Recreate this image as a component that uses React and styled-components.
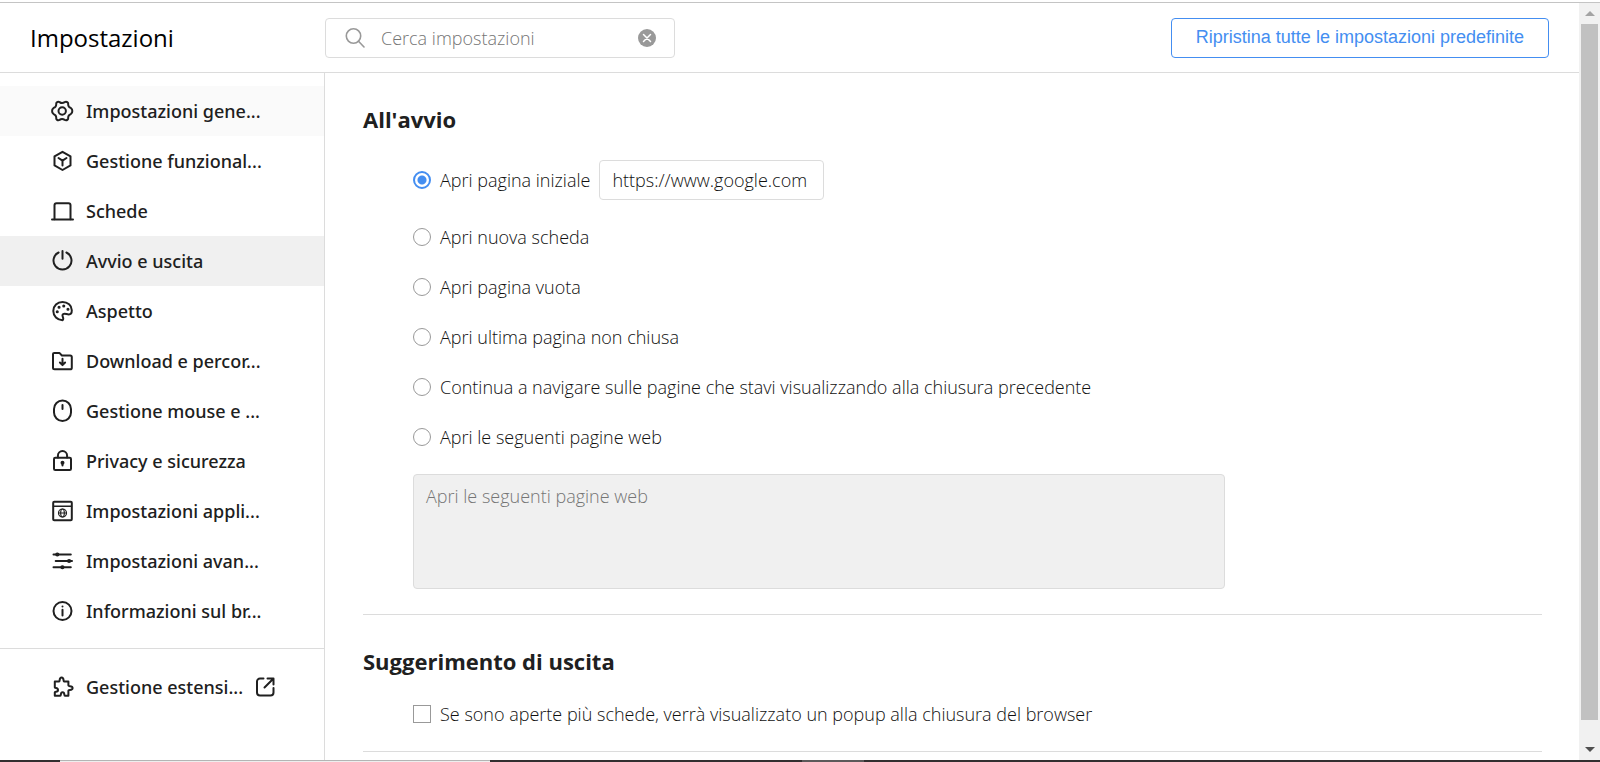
import React, { useState } from 'react'
import styled, { createGlobalStyle } from 'styled-components'

const GlobalStyle = createGlobalStyle`
  * {
    box-sizing: border-box;
  }
  body {
    margin: 0;
    background: #fff;
    color: #202020;
    font-family: "Open Sans", "Noto Sans", sans-serif;
    font-size: 18px;
  }
`

const Page = styled.div`
  display: flex;
  flex-direction: column;
  height: 100vh;
  padding-top: 2px;
  overflow: hidden;
`

const Window = styled.div`
  flex: 1;
  display: flex;
  min-height: 0;
  border-top: 1px solid #c4c4c4;
`

const Settings = styled.div`
  flex: 1;
  display: flex;
  flex-direction: column;
  min-width: 0;
`

const Header = styled.header`
  display: flex;
  align-items: center;
  flex: none;
  height: 70px;
  padding-right: 30px;
  border-bottom: 1px solid #dcdcdc;
`

const Title = styled.h1`
  width: 325px;
  margin: 0;
  padding-left: 30px;
  color: #000;
  font-size: 24px;
  font-weight: 400;
  line-height: 32px;
`

const SearchBox = styled.div`
  display: flex;
  align-items: center;
  width: 350px;
  height: 40px;
  padding: 0 18px 0 19px;
  border: 1px solid #dcdcdc;
  border-radius: 4px;
`

const SearchInput = styled.input`
  flex: 1;
  min-width: 0;
  padding: 0 16px;
  border: 0;
  outline: 0;
  background: none;
  color: #202020;
  font-family: inherit;
  font-size: 18px;
  font-weight: 300;

  &::placeholder {
    color: #757575;
    opacity: 1;
  }
`

const ClearButton = styled.button`
  display: flex;
  padding: 0;
  border: 0;
  background: none;
  cursor: pointer;
`

const ResetButton = styled.button`
  height: 40px;
  margin-left: auto;
  padding: 0 24px;
  border: 1px solid #448ef1;
  border-radius: 4px;
  background: #fff;
  color: #448ef1;
  font-family: "Liberation Sans", Arial, sans-serif;
  font-size: 18px;
  cursor: pointer;
`

const Body = styled.div`
  flex: 1;
  display: flex;
  min-height: 0;
`

const Sidebar = styled.nav`
  flex: none;
  width: 325px;
  border-right: 1px solid #dcdcdc;
`

const NavList = styled.ul`
  margin: 0;
  padding: 13px 0 12px;
  list-style: none;

  & + & {
    border-top: 1px solid #dcdcdc;
  }
`

const NavLink = styled.a`
  display: flex;
  align-items: center;
  gap: 12px;
  height: 50px;
  padding-left: 50px;
  background: ${(props) => props.$background || 'none'};
  color: #202020;
  font-family: "Noto Sans", "Open Sans", sans-serif;
  font-weight: 500;
  text-decoration: none;
  white-space: nowrap;
`

const Icon = styled.svg`
  flex: none;
  fill: none;
  stroke: ${(props) => props.$color || '#202020'};
  stroke-width: 2;
  stroke-linecap: round;
  stroke-linejoin: round;
`

const Content = styled.main`
  flex: 1;
  min-width: 0;
  padding: 0 37px 0 38px;
  overflow: hidden;
`

const Section = styled.section`
  padding-bottom: ${(props) => props.$bottom};
  border-bottom: 1px solid #dcdcdc;
`

const Heading = styled.h2`
  display: flex;
  align-items: center;
  height: 74px;
  margin: 0;
  padding-top: 18px;
  font-size: 22px;
  font-weight: 700;
`

const Option = styled.div`
  display: flex;
  align-items: center;
  height: ${(props) => (props.$tall ? '65px' : '50px')};
  padding-left: 50px;
`

const OptionLabel = styled.label`
  display: flex;
  align-items: center;
  gap: 9px;
  color: #101010;
  font-weight: 300;
`

const Radio = styled.input`
  appearance: none;
  width: 18px;
  height: 18px;
  margin: 0;
  border: 1px solid #999;
  border-radius: 50%;
  background: #fff;

  &:checked {
    border: 2px solid #448ef1;
    background: radial-gradient(circle, #448ef1 4px, #fff 5px);
  }
`

const Checkbox = styled.input`
  appearance: none;
  width: 18px;
  height: 18px;
  margin: 0;
  border: 1px solid #999;
  background: #fff;

  &:checked {
    background: #448ef1;
  }
`

const UrlInput = styled.input`
  width: 225px;
  height: 40px;
  margin-left: 9px;
  padding: 0 12px;
  border: 1px solid #dcdcdc;
  border-radius: 4px;
  color: #101010;
  font-family: inherit;
  font-size: 18px;
  font-weight: 300;
`

const PagesArea = styled.textarea`
  display: block;
  width: 812px;
  max-width: calc(100% - 50px);
  height: 115px;
  margin: 12px 0 0 50px;
  padding: 8px 12px;
  border: 1px solid #dcdcdc;
  border-radius: 4px;
  background: #f0f0f0;
  font-family: inherit;
  font-size: 18px;
  font-weight: 300;
  line-height: 26px;
  resize: none;

  &::placeholder {
    color: #757575;
    opacity: 1;
  }
`

const Scrollbar = styled.div`
  display: flex;
  flex-direction: column;
  flex: none;
  width: 21px;
  padding: 0 2px;
  background: #f1f1f1;
`

const ScrollButton = styled.button`
  display: flex;
  align-items: center;
  justify-content: center;
  height: 21px;
  padding: 0;
  border: 0;
  background: none;
`

const Track = styled.div`
  flex: 1;
  padding-bottom: 19px;
`

const Thumb = styled.div`
  height: 100%;
  background: #c1c1c1;
`

const Taskbar = styled.div`
  display: flex;
  flex: none;
  height: 2px;
  background: #332f30;
`

const TaskbarSearch = styled.div`
  width: 430px;
  margin-left: 60px;
  border-top: 1px solid #b4b4b4;
  background: #eee;
`

const TaskbarApp = styled.div`
  width: 62px;
  margin-left: 312px;
  background: #5c595a;
`

const icons = {
  general: (
    <>
      <path d="M6.800 3.400Q8.200 2.300 9.600 3.100Q12 5 14.700 3.100Q16.200 2.300 17.600 3.400Q18.400 4 18.200 5.700Q18.300 8 20.800 8.900Q22.500 10.300 22.300 12Q22.500 13.700 20.800 15.100Q18.300 16 18.200 18.300Q18.400 20 17.600 20.600Q16.200 21.700 14.700 20.900Q12 19 9.600 20.900Q8.200 21.700 6.800 20.600Q6 20 6.200 18.300Q6.100 16 3.600 15.100Q1.900 13.700 2.100 12Q1.900 10.300 3.600 8.900Q6.100 8 6.200 5.700Q6 4 6.800 3.400z" />
      <circle cx="12.200" cy="12" r="3.700" />
    </>
  ),
  features: (
    <>
      <path d="M12.500 2.800l8 4.600v9l-8 4.600-8-4.600v-9z" />
      <path d="M8.500 9l4 2.700 4-2.700M12.500 12v4.500" />
    </>
  ),
  tabs: (
    <>
      <path d="M4.500 20.200V6.200c0-1.200.8-2 2-2h12c1.200 0 2 .8 2 2v14" />
      <path d="M2 20.500h21" />
    </>
  ),
  power: <path d="M12.500 2v7.800M8.600 3.500a9 9 0 1 0 7.800 0" />,
  palette: (
    <>
      <path d="M12.500 21.200c-5.200-.2-9.200-4-9.200-9.200 0-5.200 4-9 9.200-9s9.300 3.500 9.300 8.200c0 2.400-.7 4.200-3 4.200-1.700 0-2.900-.7-4.400-.7-1.900 0-2.300 1.700-1.600 3.100.5 1.200.8 3.100-.3 3.400z" />
      <path strokeWidth="3" d="M7.200 12.800h.1M9 8.300h.1M13.700 7h.1M17.900 10.200h.1" />
    </>
  ),
  download: (
    <>
      <path d="M3 18.800V5.100c0-.7.500-1.200 1.200-1.200h5.200l2.500 2.600h8.300c.9 0 1.600.7 1.600 1.600v10.600c0 .9-.7 1.600-1.600 1.600H4.600c-.9 0-1.600-.7-1.600-1.500z" />
      <path d="M12.500 9.800v6M9.900 13.500l2.600 2.600 2.600-2.600" />
    </>
  ),
  mouse: (
    <>
      <rect x="4" y="1.500" width="17" height="20.500" rx="8.500" />
      <path d="M12.500 6v4" />
    </>
  ),
  lock: (
    <>
      <rect x="4" y="8.800" width="17" height="12.200" rx="1.300" />
      <path d="M7.900 8.500V6.700a4.600 4.600 0 0 1 9.200 0v1.800" />
      <circle cx="12.500" cy="13.700" r="1" />
      <path d="M12.500 14v2.400" />
    </>
  ),
  apps: (
    <>
      <rect x="3.200" y="2.800" width="18.600" height="18.400" rx="1" />
      <path strokeWidth="1.500" d="M3.500 7.300h18" />
      <g strokeWidth="1.200">
        <circle cx="12.500" cy="14" r="4" />
        <ellipse cx="12.500" cy="14" rx="1.800" ry="4" />
        <path d="M8.700 14h7.600" />
      </g>
    </>
  ),
  advanced: (
    <>
      <path d="M3.500 5.500h17.300M5.700 12h16.300M3.500 18.300h17.300" />
      <path strokeWidth="4" d="M7.200 5.500h.2M19 12h.2M12.300 18.300h.2" />
    </>
  ),
  info: (
    <>
      <circle cx="12.500" cy="12" r="9" />
      <path d="M12.500 10.800v5.700M12.500 7.500v.1" />
    </>
  ),
  extensions: (
    <path d="M4.800 20.800v-3.500c0-1.200 3.200.4 3.200-2.400s-3.200-1.300-3.200-2.500V6.600h4.300c1.200 0-.4-4.200 2.500-4.200s1.300 4.200 2.500 4.200h4.300v4c0 1.200 4.200-.4 4.200 2.500s-4.200 1.300-4.200 2.500v5.200h-3.500c-1.200 0 .3-3.500-2.300-3.500s-1.100 3.500-2.300 3.500z" />
  ),
}

const navItems = [
  { icon: 'general', label: 'Impostazioni gene...', background: '#fafafa' },
  { icon: 'features', label: 'Gestione funzional...' },
  { icon: 'tabs', label: 'Schede' },
  { icon: 'power', label: 'Avvio e uscita', background: '#f0f0f0' },
  { icon: 'palette', label: 'Aspetto' },
  { icon: 'download', label: 'Download e percor...' },
  { icon: 'mouse', label: 'Gestione mouse e ...' },
  { icon: 'lock', label: 'Privacy e sicurezza' },
  { icon: 'apps', label: 'Impostazioni appli...' },
  { icon: 'advanced', label: 'Impostazioni avan...' },
  { icon: 'info', label: 'Informazioni sul br...' },
]

const startupOptions = [
  'Apri pagina iniziale',
  'Apri nuova scheda',
  'Apri pagina vuota',
  'Apri ultima pagina non chiusa',
  'Continua a navigare sulle pagine che stavi visualizzando alla chiusura precedente',
  'Apri le seguenti pagine web',
]

function NavIcon({ name }) {
  return (
    <Icon width="24" height="24" viewBox="0 0 24 24" aria-hidden="true">
      {icons[name]}
    </Icon>
  )
}

function App() {
  const [search, setSearch] = useState('')
  const [startup, setStartup] = useState(0)
  const [homepage, setHomepage] = useState('https://www.google.com')

  return (
    <Page>
      <GlobalStyle />
      <Window>
        <Settings>
          <Header>
            <Title>Impostazioni</Title>
            <SearchBox>
              <Icon $color="#999" width="20" height="20" viewBox="0 0 20 20" aria-hidden="true">
                <g strokeWidth="1.600">
                  <circle cx="8.500" cy="8" r="7.200" />
                  <path d="M13.500 13.200l5.500 5.800" />
                </g>
              </Icon>
              <SearchInput
                aria-label="Cerca impostazioni"
                placeholder="Cerca impostazioni"
                value={search}
                onChange={(e) => setSearch(e.target.value)}
              />
              <ClearButton type="button" aria-label="Cancella" onClick={() => setSearch('')}>
                <Icon $color="#fff" width="18" height="18" viewBox="0 0 18 18" aria-hidden="true">
                  <circle cx="9" cy="9" r="9" fill="#999" stroke="none" />
                  <path d="M5.500 5.500l7 7M12.500 5.500l-7 7" strokeWidth="1.500" />
                </Icon>
              </ClearButton>
            </SearchBox>
            <ResetButton type="button">Ripristina tutte le impostazioni predefinite</ResetButton>
          </Header>

          <Body>
            <Sidebar>
              <NavList>
                {navItems.map((item) => (
                  <li key={item.label}>
                    <NavLink href="#" $background={item.background}>
                      <NavIcon name={item.icon} />
                      {item.label}
                    </NavLink>
                  </li>
                ))}
              </NavList>
              <NavList>
                <li>
                  <NavLink href="#">
                    <NavIcon name="extensions" />
                    Gestione estensi...
                    <Icon width="20" height="20" viewBox="0 0 20 20" aria-hidden="true">
                      <path d="M8.500 1.500H5a3 3 0 0 0-3 3v11a3 3 0 0 0 3 3h10.500a3 3 0 0 0 3-3V11M12.500 1.500h6V7.500M18 2l-8.500 8.500" />
                    </Icon>
                  </NavLink>
                </li>
              </NavList>
            </Sidebar>

            <Content>
              <Section $bottom="25px">
                <Heading>All'avvio</Heading>
                {startupOptions.map((label, index) => (
                  <Option key={label} $tall={index === 0}>
                    <OptionLabel>
                      <Radio
                        type="radio"
                        name="startup"
                        checked={startup === index}
                        onChange={() => setStartup(index)}
                      />
                      {label}
                    </OptionLabel>
                    {index === 0 && (
                      <UrlInput
                        aria-label="Pagina iniziale"
                        value={homepage}
                        onChange={(e) => setHomepage(e.target.value)}
                      />
                    )}
                  </Option>
                ))}
                <PagesArea
                  aria-label="Apri le seguenti pagine web"
                  placeholder="Apri le seguenti pagine web"
                  disabled={startup !== 5}
                />
              </Section>
              <Section $bottom="12px">
                <Heading>Suggerimento di uscita</Heading>
                <Option>
                  <OptionLabel>
                    <Checkbox type="checkbox" />
                    Se sono aperte più schede, verrà visualizzato un popup alla chiusura del browser
                  </OptionLabel>
                </Option>
              </Section>
            </Content>
          </Body>
        </Settings>

        <Scrollbar>
          <ScrollButton type="button" aria-label="Scorri su">
            <svg width="10" height="5" viewBox="0 0 10 5" fill="#a3a3a3">
              <path d="M5 0l5 5H0z" />
            </svg>
          </ScrollButton>
          <Track>
            <Thumb />
          </Track>
          <ScrollButton type="button" aria-label="Scorri giù">
            <svg width="10" height="5" viewBox="0 0 10 5" fill="#505050">
              <path d="M0 0h10L5 5z" />
            </svg>
          </ScrollButton>
        </Scrollbar>
      </Window>
      <Taskbar>
        <TaskbarSearch />
        <TaskbarApp />
      </Taskbar>
    </Page>
  )
}

export default App
